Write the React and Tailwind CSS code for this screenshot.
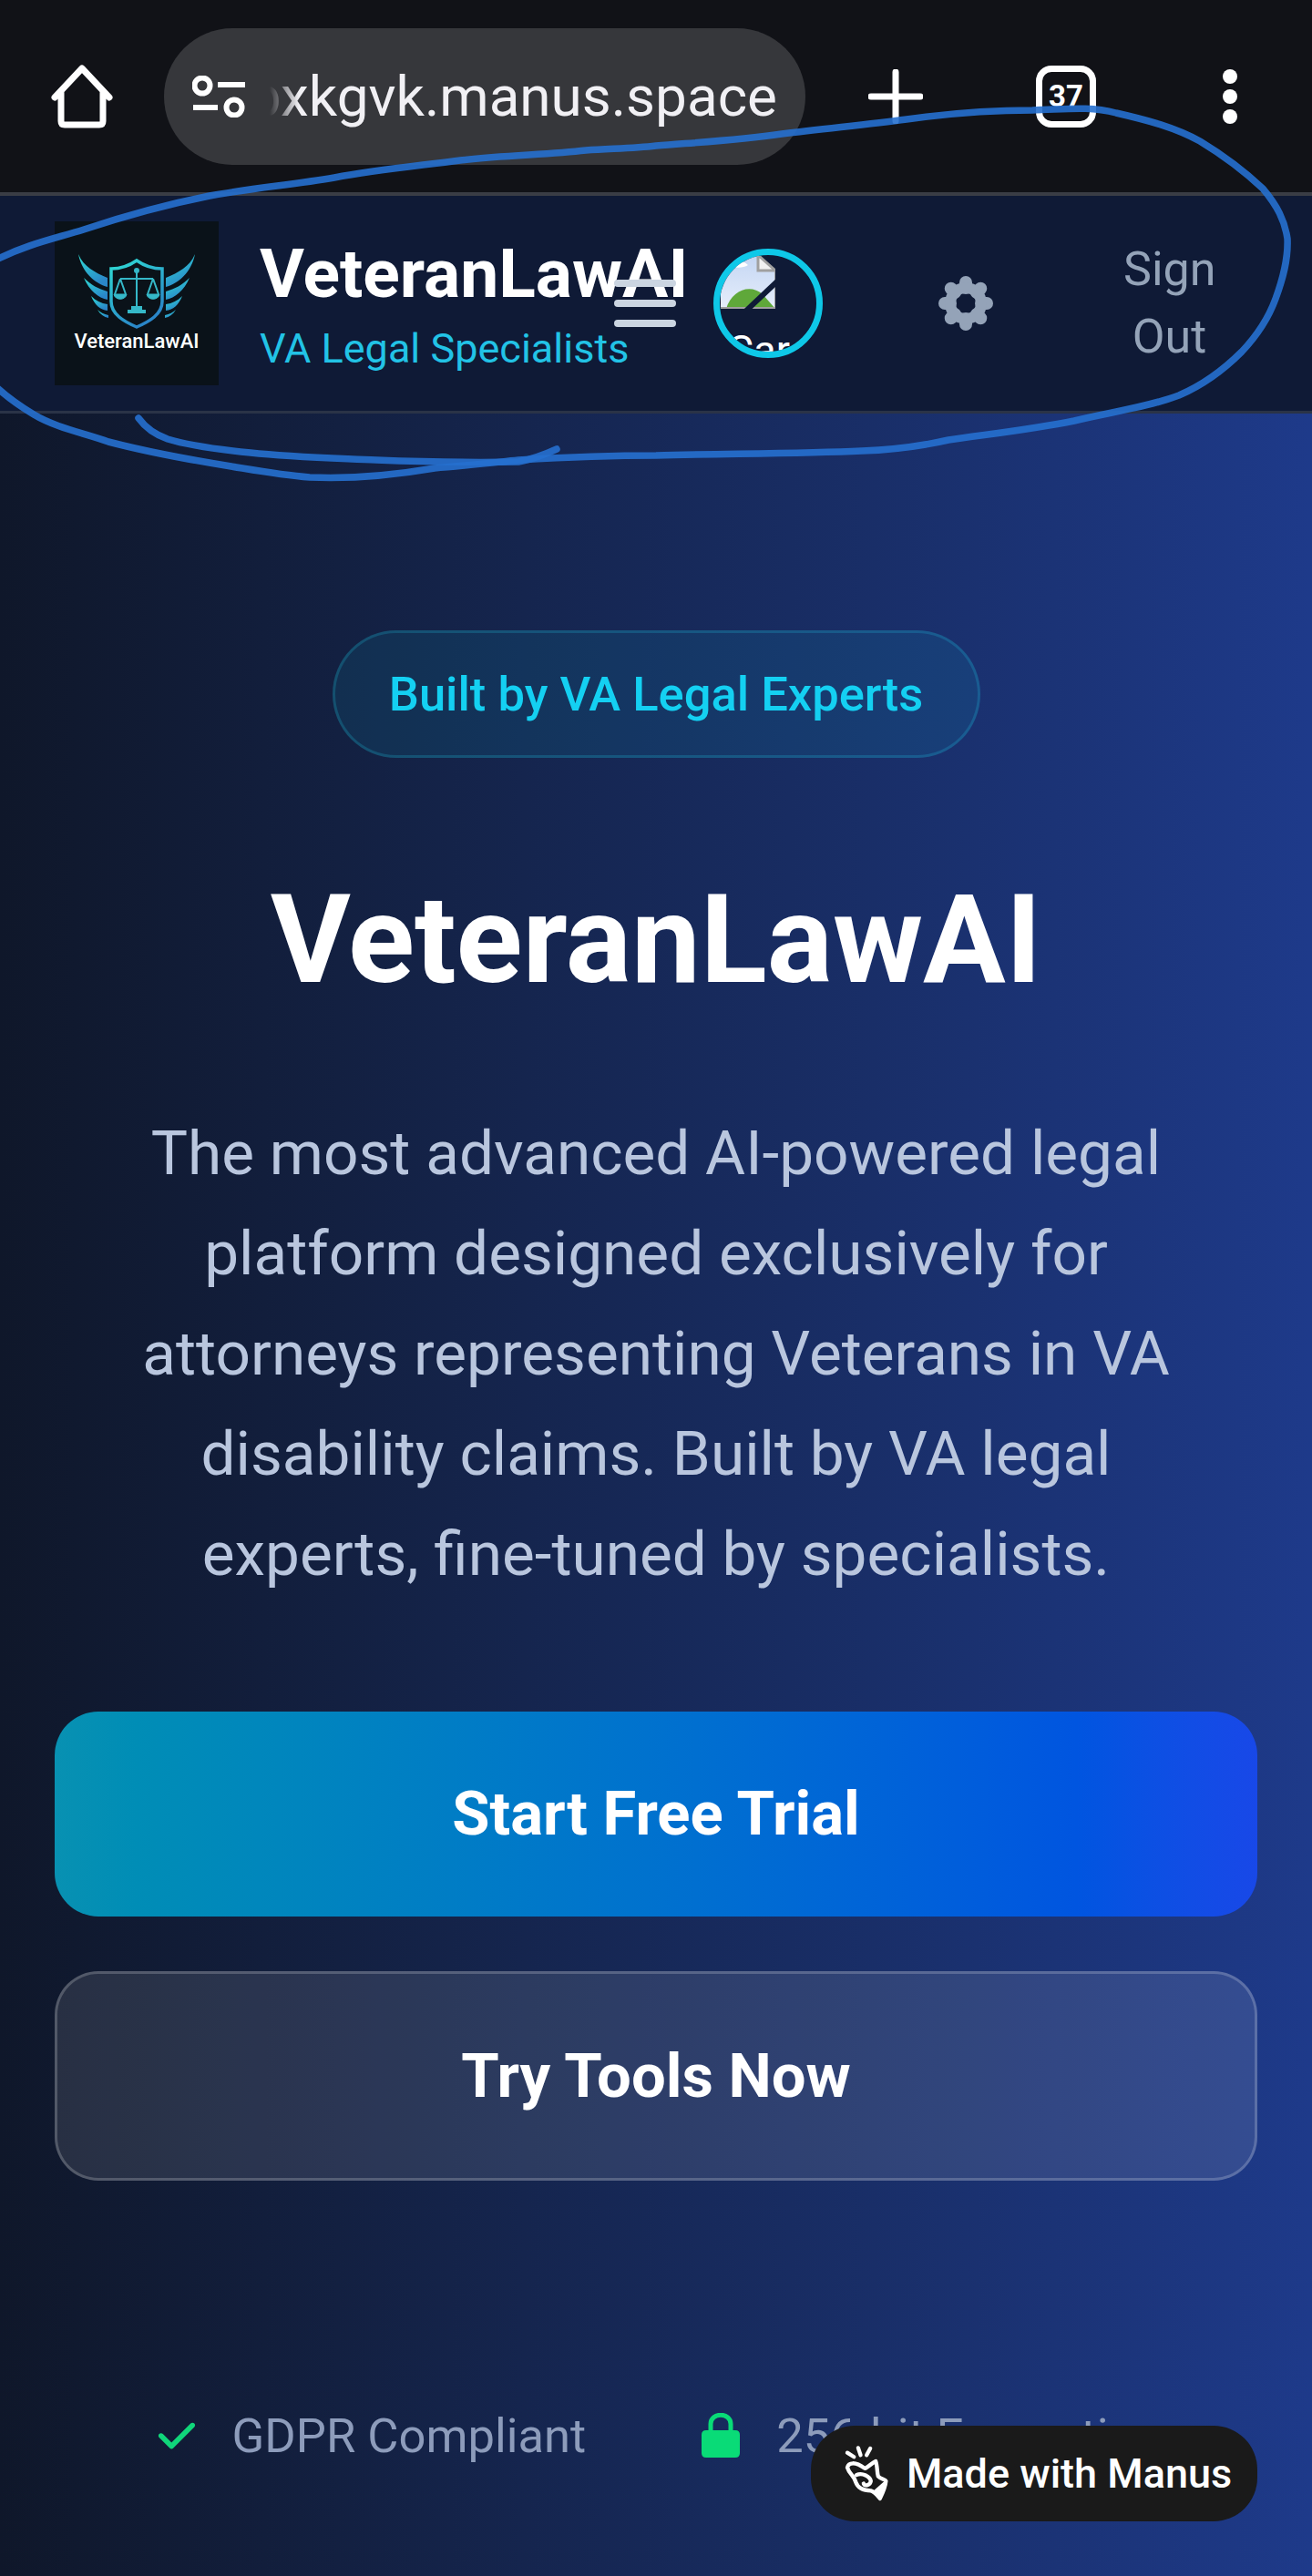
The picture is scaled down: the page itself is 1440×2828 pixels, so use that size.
import React from 'react';
import { FaCheck } from 'react-icons/fa6';

const HomeIcon = () => (
  <svg width="68" height="70" viewBox="0 0 68 70" fill="none" stroke="#fff" strokeWidth="7" strokeLinejoin="round" strokeLinecap="round">
    <path d="M4 36 L34 4 L64 36 M11 30 V62 Q11 66 15 66 H53 Q57 66 57 62 V30" />
  </svg>
);

const TuneIcon = () => (
  <svg width="58" height="46" viewBox="0 0 58 46" fill="none" stroke="#fff" strokeWidth="6">
    <circle cx="11" cy="11" r="8.5" />
    <path d="M28 10 H58 M1 35 H28" />
    <circle cx="46" cy="35" r="8.5" />
  </svg>
);

const GearIcon = () => (
  <svg width="60" height="60" viewBox="0 0 60 60" fill="none">
    {[0, 45, 90, 135, 180, 225, 270, 315].map((deg) => (
      <rect key={deg} x="23" y="0" width="14" height="20" rx="7" fill="#94a3b8" transform={`rotate(${deg} 30 30)`} />
    ))}
    <circle cx="30" cy="30" r="17" stroke="#94a3b8" strokeWidth="12" />
  </svg>
);

const Logo = () => (
  <div className="relative w-[180px] h-[180px] shrink-0 bg-[#0a1219]">
    <svg width="180" height="180" viewBox="0 0 180 180" fill="none" className="absolute left-0 top-0">
      <defs>
        <linearGradient id="lg" x1="0" y1="0" x2="0.5" y2="1">
          <stop offset="0" stopColor="#2fdcd4" />
          <stop offset="1" stopColor="#2a86c8" />
        </linearGradient>
      </defs>
      {/* wings */}
      <g fill="url(#lg)">
        <path d="M26 36 C32 50 44 56 58 62 V72 C44 68 30 56 26 36Z" />
        <path d="M32 62 C40 70 48 74 58 77 V86 C48 84 38 76 32 62Z" />
        <path d="M40 82 C45 87 51 90 58 91 V98 C50 97 44 92 40 82Z" />
        <path d="M47 97 C50 100 54 102 59 103 V106 C54 105 50 102 47 97Z" />
        <path d="M154 36 C148 50 136 56 122 62 V72 C136 68 150 56 154 36Z" />
        <path d="M148 62 C140 70 132 74 122 77 V86 C132 84 142 76 148 62Z" />
        <path d="M140 82 C135 87 129 90 122 91 V98 C130 97 136 92 140 82Z" />
        <path d="M133 97 C130 100 126 102 121 103 V106 C126 105 130 102 133 97Z" />
      </g>
      {/* shield */}
      <path d="M90 43 C80 50 72 52 62 52 V88 C62 102 76 110 90 116 C104 110 118 102 118 88 V52 C108 52 100 50 90 43Z" stroke="url(#lg)" strokeWidth="3.5" />
      {/* scales */}
      <g stroke="#35b8c8" strokeWidth="2.5">
        <path d="M90 53 V96 M72 63 H108 M72 63 L66 80 M72 63 L78 80 M108 63 L102 80 M108 63 L114 80" strokeWidth="2" />
        <path d="M65 80 H79 C78 87 66 87 65 80Z M101 80 H115 C114 87 102 87 101 80Z" fill="#35b8c8" strokeWidth="1" />
        <path d="M80 99 H100 M84 95 H96" strokeWidth="4" />
      </g>
      <circle cx="90" cy="54" r="3" fill="#35b8c8" />
    </svg>
    <div className="absolute left-0 right-0 top-[118px] text-center text-[22px] leading-[28px] font-medium text-white">VeteranLawAI</div>
  </div>
);

// the browser's broken image marker
const BrokenImage = () => (
  <svg width="60" height="58" viewBox="0 0 60 58" className="absolute left-[1px] top-[1px]">
    <defs>
      <linearGradient id="sky" x1="0" y1="0" x2="0" y2="1">
        <stop offset="0" stopColor="#c4d6f3" />
        <stop offset="1" stopColor="#e6eefb" />
      </linearGradient>
    </defs>
    <path d="M0 0 H42 L60 16 V58 H0Z" fill="url(#sky)" />
    <path d="M8 8 C14 2 24 4 30 10 C24 14 12 14 8 8Z" fill="#fff" />
    <path d="M6 58 C12 38 32 30 46 42 L60 58Z" fill="#5fa83a" />
    <path d="M41 0 V16 H60 L42 0Z" fill="#f2f2f2" stroke="#a0a0a0" strokeWidth="3" />
    <path d="M0 57 H60 V16" fill="none" stroke="#a0a0a0" strokeWidth="2" />
    <path d="M26 62 L64 26" stroke="#0f1a36" strokeWidth="6" />
  </svg>
);

const MadeIcon = () => (
  <svg width="53" height="63" viewBox="80 70 160 190" fill="none" stroke="#fff" strokeWidth="13" strokeLinecap="round" strokeLinejoin="round">
    <path d="M92 96 L114 110 M128 80 L136 104 M168 82 L156 104" />
    <path d="M92 145 C96 128 118 124 150 148 C160 146 172 130 186 124 C192 140 190 160 194 174 C204 184 218 184 220 190 C218 212 208 232 200 248 C190 236 184 226 170 222 C148 222 128 216 120 194 C116 174 98 166 92 145Z" />
    <path d="M122 170 C142 160 168 176 170 190 C168 204 150 208 146 198" />
    <path d="M216 192 C214 214 206 234 200 250 C192 238 186 230 180 224Z" fill="#fff" strokeWidth="4" />
  </svg>
);

const Lock = () => (
  <svg width="42" height="50" viewBox="0 0 42 50" fill="none">
    <path d="M10 22 V12 C10 -1 32 -1 32 12 V22" stroke="#09db77" strokeWidth="5" />
    <path d="M0 24 Q0 19 5 19 H37 Q42 19 42 24 V44 Q42 49 37 49 H5 Q0 49 0 44Z" fill="#09db77" />
  </svg>
);

// pen scribble drawn over the screenshot
const Scribble = () => (
  <svg width="1440" height="560" viewBox="0 0 1440 560" fill="none" className="absolute left-0 top-0 pointer-events-none" stroke="#2670cf" strokeOpacity="0.9" strokeWidth="7.5" strokeLinecap="round">
    <path d="M-4 285 C30 268 60 262 92 252 C140 236 185 224 230 215 C280 206 320 203 367 195 C415 186 460 182 505 176 C555 170 600 170 643 165 C670 163 695 163 720 160 C770 156 810 154 858 147 C905 141 950 137 995 131 C1045 124 1085 121 1133 121 C1170 120 1195 116 1225 124 C1260 132 1290 140 1317 155 C1345 172 1368 190 1386 207 C1402 226 1410 242 1413 262 C1414 285 1408 306 1400 328 C1392 350 1380 368 1363 386 C1345 404 1322 422 1294 434 C1260 447 1220 452 1179 462 C1135 471 1090 476 1041 483 C1010 490 975 494 946 495 C880 498 800 498 720 500 C670 500 620 502 569 505 C540 508 505 512 477 514 C430 522 385 526 340 524 C315 522 290 518 266 514 C215 506 165 497 119 485 C95 476 62 470 37 455 C22 446 8 436 -4 425" />
    <path d="M152 459 C160 470 170 477 184 482 C210 490 245 494 275 497 C320 502 370 503 413 505 C465 507 520 508 569 507 C585 504 598 499 611 493" />
  </svg>
);

export default function App() {
  return (
    <div className="relative w-full h-[2828px] overflow-hidden font-['Roboto',sans-serif] bg-[#111217]">
      {/* browser toolbar */}
      <div className="h-[211px] flex items-center pl-[56px] bg-[#111217]">
        <div className="w-[68px] shrink-0 flex"><HomeIcon /></div>
        <div className="relative ml-[56px] w-[704px] h-[150px] shrink-0 rounded-[75px] bg-[#36373b] flex items-center overflow-hidden">
          <div className="ml-[31px] w-[58px] flex shrink-0"><TuneIcon /></div>
          <div className="relative ml-[27px] w-[557px] overflow-hidden whitespace-nowrap text-[62px] leading-[80px] text-[#f1f0f4] flex justify-end">
            <span className="shrink-0">bxkgvk.manus.space</span>
            <div className="absolute left-0 top-0 w-[32px] h-full bg-gradient-to-r from-[#36373b] to-transparent" />
          </div>
        </div>
        <svg width="60" height="60" viewBox="0 0 60 60" className="ml-[69px] shrink-0" stroke="#fff" strokeWidth="7" strokeLinecap="round">
          <path d="M30 3 V57 M3 30 H57" />
        </svg>
        <div className="ml-[124px] w-[66px] h-[68px] shrink-0 rounded-[17px] border-[7px] border-white flex items-center justify-center text-[33px] font-bold text-white">37</div>
        <div className="ml-[139px] w-[16px] flex flex-col gap-[6px] shrink-0">
          <div className="h-[16px] rounded-full bg-white" />
          <div className="h-[16px] rounded-full bg-white" />
          <div className="h-[16px] rounded-full bg-white" />
        </div>
      </div>

      {/* app header */}
      <div className="h-[243px] flex items-center pl-[60px] bg-[#0f1a36] border-t-[4px] border-t-[#3a3d45] border-b-[3px] border-b-[#2a3347]">
        <Logo />
        <div className="ml-[45px] w-[389px] shrink-0 whitespace-nowrap">
          <div className="text-[75px] leading-[84px] font-bold text-white">VeteranLawAI</div>
          <div className="mt-[16px] text-[45px] leading-[50px] text-[#22c3e6]">VA Legal Specialists</div>
        </div>
        <div className="relative w-[68px] shrink-0 flex flex-col gap-[14px]">
          <div className="h-[8px] rounded-full bg-[#cbd5e1]" />
          <div className="h-[8px] rounded-full bg-[#cbd5e1]" />
          <div className="h-[8px] rounded-full bg-[#cbd5e1]" />
        </div>
        <div className="relative ml-[41px] w-[120px] h-[120px] shrink-0 rounded-full border-[7px] border-[#0ec8e8] overflow-hidden">
          <BrokenImage />
          <div className="absolute left-[8px] top-[80px] text-[45px] leading-[50px] text-white">Car</div>
        </div>
        <div className="ml-[127px] shrink-0 flex"><GearIcon /></div>
        <div className="ml-[143px] w-[101px] shrink-0 text-center text-[52px] leading-[74px] text-[#94a3b8]">Sign Out</div>
      </div>

      {/* hero */}
      <div className="h-[2374px] bg-gradient-to-r from-[#0f172a] to-[#1e3a8a] pt-[238px] px-[60px] flex flex-col items-center">
        <div className="w-[711px] h-[140px] rounded-full border-[3px] border-[#22d3ee]/20 bg-[#06b6d4]/10 flex items-center justify-center text-[52.5px] font-medium text-[#14d0f2] whitespace-nowrap">
          Built by VA Legal Experts
        </div>
        <h1 className="mt-[122px] text-[135px] leading-[156px] font-bold text-white whitespace-nowrap">VeteranLawAI</h1>
        <p className="mt-[101px] w-[1280px] text-center text-[67.5px] leading-[110px] text-[#b9c6de]">
          The most advanced AI-powered legal<br />
          platform designed exclusively for<br />
          attorneys representing Veterans in VA<br />
          disability claims. Built by VA legal<br />
          experts, fine-tuned by specialists.
        </p>
        <button className="mt-[118px] w-full h-[225px] shrink-0 rounded-[48px] bg-gradient-to-r from-[#0891b2] via-[#0055e0] via-85% to-[#1848e8] text-[67px] font-bold text-white">
          Start Free Trial
        </button>
        <button className="mt-[60px] w-full h-[230px] shrink-0 rounded-[48px] border-[3px] border-white/20 bg-white/10 text-[67px] font-bold text-white">
          Try Tools Now
        </button>
        <div className="mt-[250px] ml-[6px] flex items-center">
          <FaCheck size={46} className="text-[#10d67a]" />
          <span className="ml-[38px] text-[52.5px] leading-[60px] text-[#8d9cbb] whitespace-nowrap">GDPR Compliant</span>
          <div className="ml-[127px] flex"><Lock /></div>
          <span className="ml-[40px] text-[52.5px] leading-[60px] text-[#8d9cbb] whitespace-nowrap">256-bit Encryption</span>
        </div>
      </div>

      <Scribble />

      {/* floating badge */}
      <div className="absolute left-[890px] top-[2663px] w-[490px] h-[105px] rounded-[48px] bg-[#1a1a1a] flex items-center pl-[36px]">
        <MadeIcon />
        <span className="ml-[16px] text-[45px] font-medium text-white whitespace-nowrap">Made with Manus</span>
      </div>
    </div>
  );
}
